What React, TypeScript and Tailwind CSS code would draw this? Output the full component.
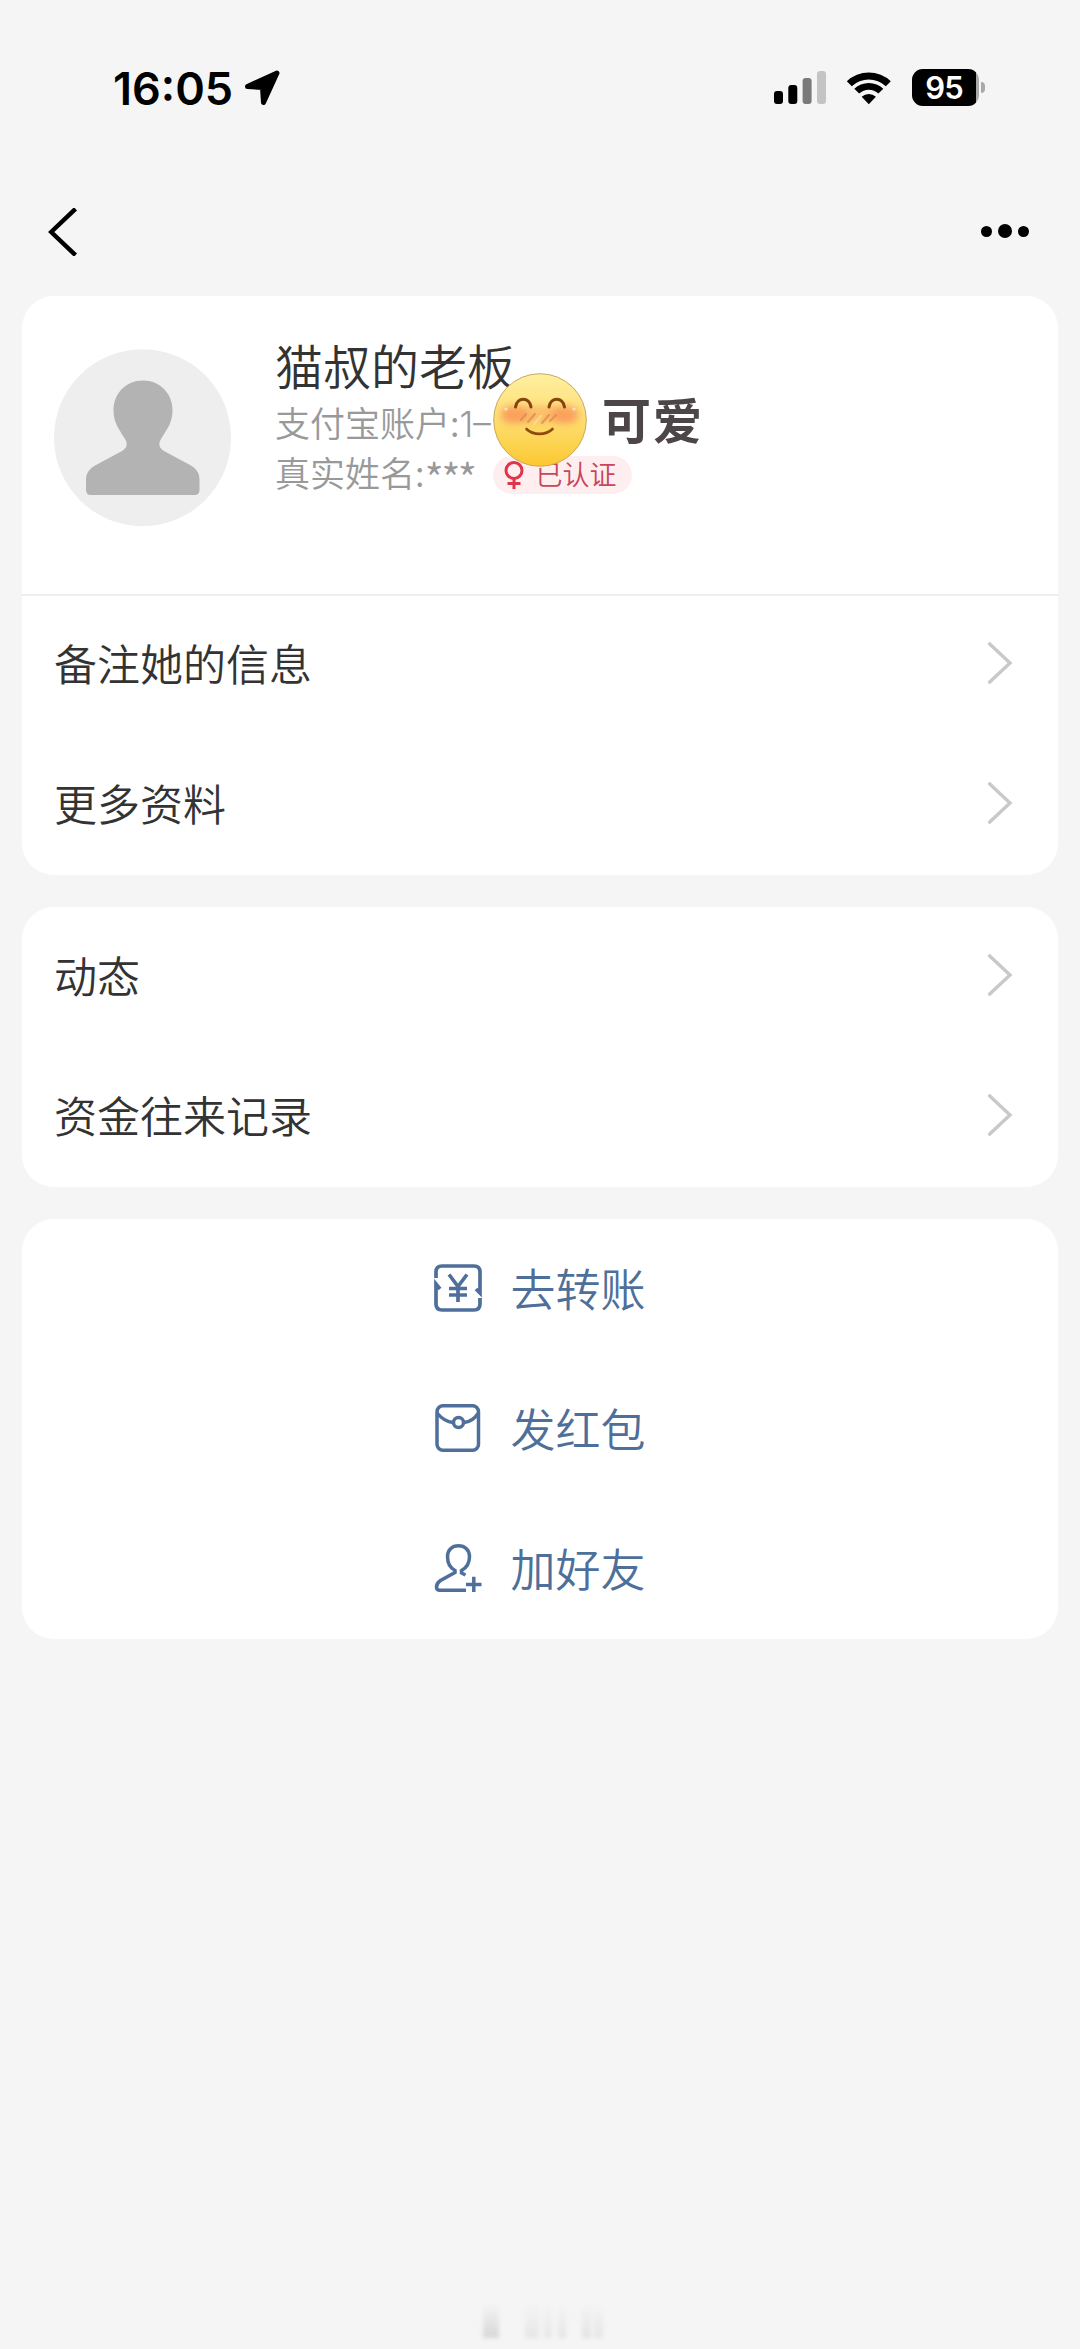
import type { ReactNode } from 'react'

const infoRows = ['备注她的信息', '更多资料']
const recordRows = ['动态', '资金往来记录']

function LocationArrow() {
  return (
    <svg className="ml-[10px] h-[38px] w-[38px]" viewBox="0 0 38 38">
      <path
        d="M34 4 L20.500 33.500 L19.500 18.500 L4.500 17.500 Z"
        fill="#000"
        stroke="#000"
        strokeWidth="5"
        strokeLinejoin="round"
      />
    </svg>
  )
}

function Signal() {
  return (
    <svg className="h-[33px] w-[53px]" viewBox="0 0 53 33">
      <rect x="0" y="20" width="9" height="13" rx="3" fill="#000" />
      <rect x="14.3" y="14" width="9" height="19" rx="3" fill="#000" />
      <rect x="28.6" y="7" width="9" height="26" rx="3" fill="#7a7a7a" />
      <rect x="43" y="0" width="9" height="33" rx="3" fill="#c4c4c4" />
    </svg>
  )
}

function Wifi() {
  return (
    <svg className="ml-[19px] h-[34px] w-[46px]" viewBox="0 0 46 34">
      <path d="M0.8 10.2 A32 32 0 0 1 44.8 10.2 L39.8 15.2 A25 25 0 0 0 5.8 15.2 Z" fill="#000" />
      <path d="M8.3 17.8 A21 21 0 0 1 37.3 17.8 L32.4 22.6 A14 14 0 0 0 13.2 22.6 Z" fill="#000" />
      <path d="M15.7 25.7 A10.5 10.5 0 0 1 29.9 25.7 L22.8 33.2 Z" fill="#000" />
    </svg>
  )
}

function Battery() {
  return (
    <div className="ml-[20px] flex items-center">
      <div className="flex h-[37px] w-[67px] overflow-hidden rounded-[11px] bg-[#a9a9a9]">
        <div className="flex h-full w-[64px] items-center justify-center bg-black font-['Inter',sans-serif] text-[31px] leading-none font-semibold tracking-[-1px] text-white">
          95
        </div>
      </div>
      <div className="ml-[2px] h-[11px] w-[4px] rounded-r-full bg-[#a9a9a9]" />
    </div>
  )
}

function StatusBar() {
  return (
    <header className="flex h-[175px] items-start pr-[95px] pl-[113px]">
      <div className="flex items-center pt-[69px]">
        <span className="pt-[2px] font-['Inter',sans-serif] text-[45px] leading-[36px] font-semibold text-black">
          16:05
        </span>
        <LocationArrow />
      </div>
      <div className="ml-auto flex items-center pt-[69px]">
        <Signal />
        <Wifi />
        <Battery />
      </div>
    </header>
  )
}

function NavBar() {
  return (
    <nav className="flex h-[121px] items-start justify-between pr-[51px] pl-[48px]">
      <svg className="mt-[33px] h-[48px] w-[30px]" viewBox="0 0 30 48" fill="none">
        <path d="M27.5 0.8 L3.2 24 L27.5 47.2" stroke="#000" strokeWidth="4.4" />
      </svg>
      <div className="mt-[49px] flex items-center gap-[6px]">
        <span className="h-[11px] w-[11px] rounded-full bg-black" />
        <span className="h-[14px] w-[14px] rounded-full bg-black" />
        <span className="h-[11px] w-[11px] rounded-full bg-black" />
      </div>
    </nav>
  )
}

function Avatar() {
  return (
    <svg className="h-[178px] w-[178px] shrink-0" viewBox="0 0 178 178">
      <circle cx="88.500" cy="88.700" r="88.500" fill="#eee" />
      <path
        d="M89 31.5 C106 31.5 118.5 44.5 118.5 61 C118.5 74 113 80 107 90 C104 95 105 99 110 102 L136 116 C143 120 145.500 124 145.500 131 V141 Q145.500 146 140.500 146 H37 Q32 146 32 141 V131 C32 124 35 120 42 116 L68 102 C73 99 74 95 71 90 C65 80 59.500 74 59.500 61 C59.500 44.500 72 31.500 89 31.500 Z"
        fill="#b3b3b3"
      />
    </svg>
  )
}

function BlushEmoji() {
  return (
    <svg className="h-[94px] w-[94px]" viewBox="0 0 94 94" fill="none">
      <defs>
        <linearGradient id="face" x1="47" y1="0" x2="47" y2="94" gradientUnits="userSpaceOnUse">
          <stop offset="0" stopColor="#fff0a0" />
          <stop offset="0.35" stopColor="#fee281" />
          <stop offset="0.7" stopColor="#fdd658" />
          <stop offset="1" stopColor="#fcc72f" />
        </linearGradient>
        <filter id="soft" x="-30%" y="-50%" width="160%" height="200%">
          <feGaussianBlur stdDeviation="3.500" />
        </filter>
      </defs>
      <circle cx="47" cy="47" r="46.3" fill="url(#face)" stroke="#c9a860" strokeWidth="1" />
      <rect x="8" y="33" width="78" height="17" rx="8" fill="#fbb266" opacity="0.75" filter="url(#soft)" />
      <ellipse cx="22" cy="42" rx="13" ry="8" fill="#f98d55" opacity="0.6" filter="url(#soft)" />
      <ellipse cx="71" cy="42" rx="13" ry="8" fill="#f98d55" opacity="0.6" filter="url(#soft)" />
      <path
        d="M28 47 L33 41 M35 49 L42 41 M49 50 L56 42 M57 48 L63 42"
        stroke="#e08a50"
        strokeWidth="2.200"
        strokeLinecap="round"
        opacity="0.75"
      />
      <path d="M41 51 L48 43" stroke="#fdd98a" strokeWidth="2.500" strokeLinecap="round" />
      <path d="M22.500 34 C24 23.500 36.500 23.500 38 34" stroke="#834509" strokeWidth="3" strokeLinecap="round" />
      <path d="M56 34 C57.500 23.500 70 23.500 71.500 34" stroke="#834509" strokeWidth="3" strokeLinecap="round" />
      <path d="M33.500 56 C40 62.500 53 62.500 59.500 56" stroke="#8f4a10" strokeWidth="2.600" strokeLinecap="round" />
      <circle cx="13" cy="36" r="1.6" fill="#fff" opacity="0.6" />
      <circle cx="81" cy="36" r="1.6" fill="#fff" opacity="0.6" />
    </svg>
  )
}

function VerifiedBadge() {
  return (
    <span className="mt-[3px] ml-[18px] flex h-[38px] w-[139px] items-center rounded-full bg-[#ffeef0] pl-[11px]">
      <svg className="h-[28px] w-[20px]" viewBox="0 0 20 28" fill="none" stroke="#e0344a" strokeWidth="3">
        <circle cx="10" cy="9.500" r="8" />
        <path d="M10 17.500 V28 M3.500 22.500 H16.500" />
      </svg>
      <span className="-mt-[2px] ml-[12px] text-[27px] leading-[38px] text-[#c8465a]">已认证</span>
    </span>
  )
}

function Profile() {
  return (
    <section className="relative flex h-[298px] items-start pt-[53px] pl-[32px]">
      <Avatar />
      <div className="-mt-[14px] ml-[43px]">
        <h1 className="text-[48px] leading-[58px] text-[#333]">猫叔的老板</h1>
        <p className="mt-[4px] text-[35px] leading-[50px] text-[#999]">
          支付宝账户:<span className="font-['Inter',sans-serif] font-light">1–</span>
        </p>
        <div className="-mt-px flex h-[50px] items-center text-[35px] leading-[50px] text-[#999]">
          <span className="-mt-[2px]">真实姓名:</span>
          <span className="mt-[8px] text-[42px] leading-[50px] tracking-[-2.6px]">***</span>
          <VerifiedBadge />
        </div>
      </div>
      {/* sticker covering part of the account line */}
      <div className="absolute top-[77px] left-[471px] flex items-center">
        <BlushEmoji />
        <span className="-mt-[4px] ml-[15px] text-[49px] leading-[94px] font-bold tracking-[2px] text-[#4d4648]">
          可爱
        </span>
      </div>
    </section>
  )
}

function Card({ className = '', children }: { className?: string; children: ReactNode }) {
  return <div className={`mx-[22px] rounded-[32px] bg-white ${className}`}>{children}</div>
}

function LinkRow({ label }: { label: string }) {
  return (
    <div className="flex h-[140px] items-center justify-between pr-[45px] pl-[32px]">
      <span className="-mt-[6px] text-[43px] leading-none text-[#333]">{label}</span>
      <svg className="-mt-[5px] h-[42px] w-[25px]" viewBox="0 0 25 42" fill="none">
        <path d="M0.500 0.800 L22 21 L0.500 41.200" stroke="#c9c9c9" strokeWidth="3.400" />
      </svg>
    </div>
  )
}

function TransferIcon() {
  return (
    <svg className="h-[48px] w-[48px]" viewBox="0 0 48 48" fill="none" stroke="#4f6f9b" strokeWidth="3.700">
      <path d="M2 14 V8 Q2 2 8 2 H40 Q46 2 46 8 V29 L42 25" />
      <path d="M46 34 V40 Q46 46 40 46 H8 Q2 46 2 40 V20 L6 25" />
      <path d="M15 10.500 L24 22.500 L33 10.500 M24 22.500 V38 M15 24.500 H33 M15 31 H33" />
    </svg>
  )
}

function RedPacketIcon() {
  return (
    <svg className="h-[48px] w-[48px]" viewBox="0 0 48 48" fill="none" stroke="#4f6f9b" strokeWidth="3.500">
      <rect x="3" y="1.700" width="41.500" height="44.500" rx="6" />
      <path d="M3 9 C8 15 13 18 19 18.500 M44.500 9 C40.500 15 35.500 18 30 18.500" />
      <circle cx="24.500" cy="18.500" r="5" />
    </svg>
  )
}

function AddFriendIcon() {
  return (
    <svg className="h-[48px] w-[48px]" viewBox="0 0 48 48" fill="none" stroke="#4f6f9b" strokeWidth="3.500">
      <path d="M31.500 31 L27.500 29 V26.500 C33 23.500 35.500 18 35.500 12.500 C35.500 6 31 1.800 24.500 1.800 C18 1.800 13.500 6 13.500 12.500 C13.500 18 15.500 23.500 21 26.500 V28.500 L6.500 36.500 C3.500 38.500 2.500 40 2.500 43 Q2.500 46.300 6 46.300 H32" />
      <path d="M32 40.500 H47.500 M39.800 32.800 V48" />
    </svg>
  )
}

function ActionRow({ icon, label }: { icon: ReactNode; label: string }) {
  return (
    <div className="flex h-[140px] items-center justify-center gap-[28px]">
      <div className="-mt-[2px]">{icon}</div>
      <span className="-mt-[4px] text-[45px] leading-none text-[#4f6f9b]">{label}</span>
    </div>
  )
}

function BottomTrace() {
  return (
    <footer className="mt-auto mb-[11px] flex h-[34px] items-end pl-[483px]">
      <span className="h-[34px] w-[16px] bg-linear-to-b from-transparent to-[#d6d6d6] blur-[2px]" />
      <span className="ml-[26px] h-[34px] w-[14px] bg-linear-to-b from-transparent to-[#e6e6e6] blur-[2px]" />
      <span className="ml-[5px] h-[34px] w-[8px] bg-linear-to-b from-transparent to-[#e6e6e6] blur-[2px]" />
      <span className="ml-[6px] h-[34px] w-[8px] bg-linear-to-b from-transparent to-[#e4e4e4] blur-[2px]" />
      <span className="ml-[16px] h-[34px] w-[9px] bg-linear-to-b from-transparent to-[#e3e3e3] blur-[2px]" />
      <span className="ml-[3px] h-[34px] w-[9px] bg-linear-to-b from-transparent to-[#e5e5e5] blur-[2px]" />
    </footer>
  )
}

export default function App() {
  return (
    <div className="flex h-[2349px] w-[1080px] flex-col overflow-hidden bg-[#f5f5f5] font-['Noto_Sans_CJK_SC',sans-serif] font-[350]">
      <StatusBar />
      <NavBar />
      <Card>
        <Profile />
        <div className="-mb-px h-[2px] bg-[#eee]" />
        {infoRows.map((label) => (
          <LinkRow key={label} label={label} />
        ))}
      </Card>
      <Card className="mt-[32px]">
        {recordRows.map((label) => (
          <LinkRow key={label} label={label} />
        ))}
      </Card>
      <Card className="mt-[32px]">
        <ActionRow icon={<TransferIcon />} label="去转账" />
        <ActionRow icon={<RedPacketIcon />} label="发红包" />
        <ActionRow icon={<AddFriendIcon />} label="加好友" />
      </Card>
      <BottomTrace />
    </div>
  )
}
